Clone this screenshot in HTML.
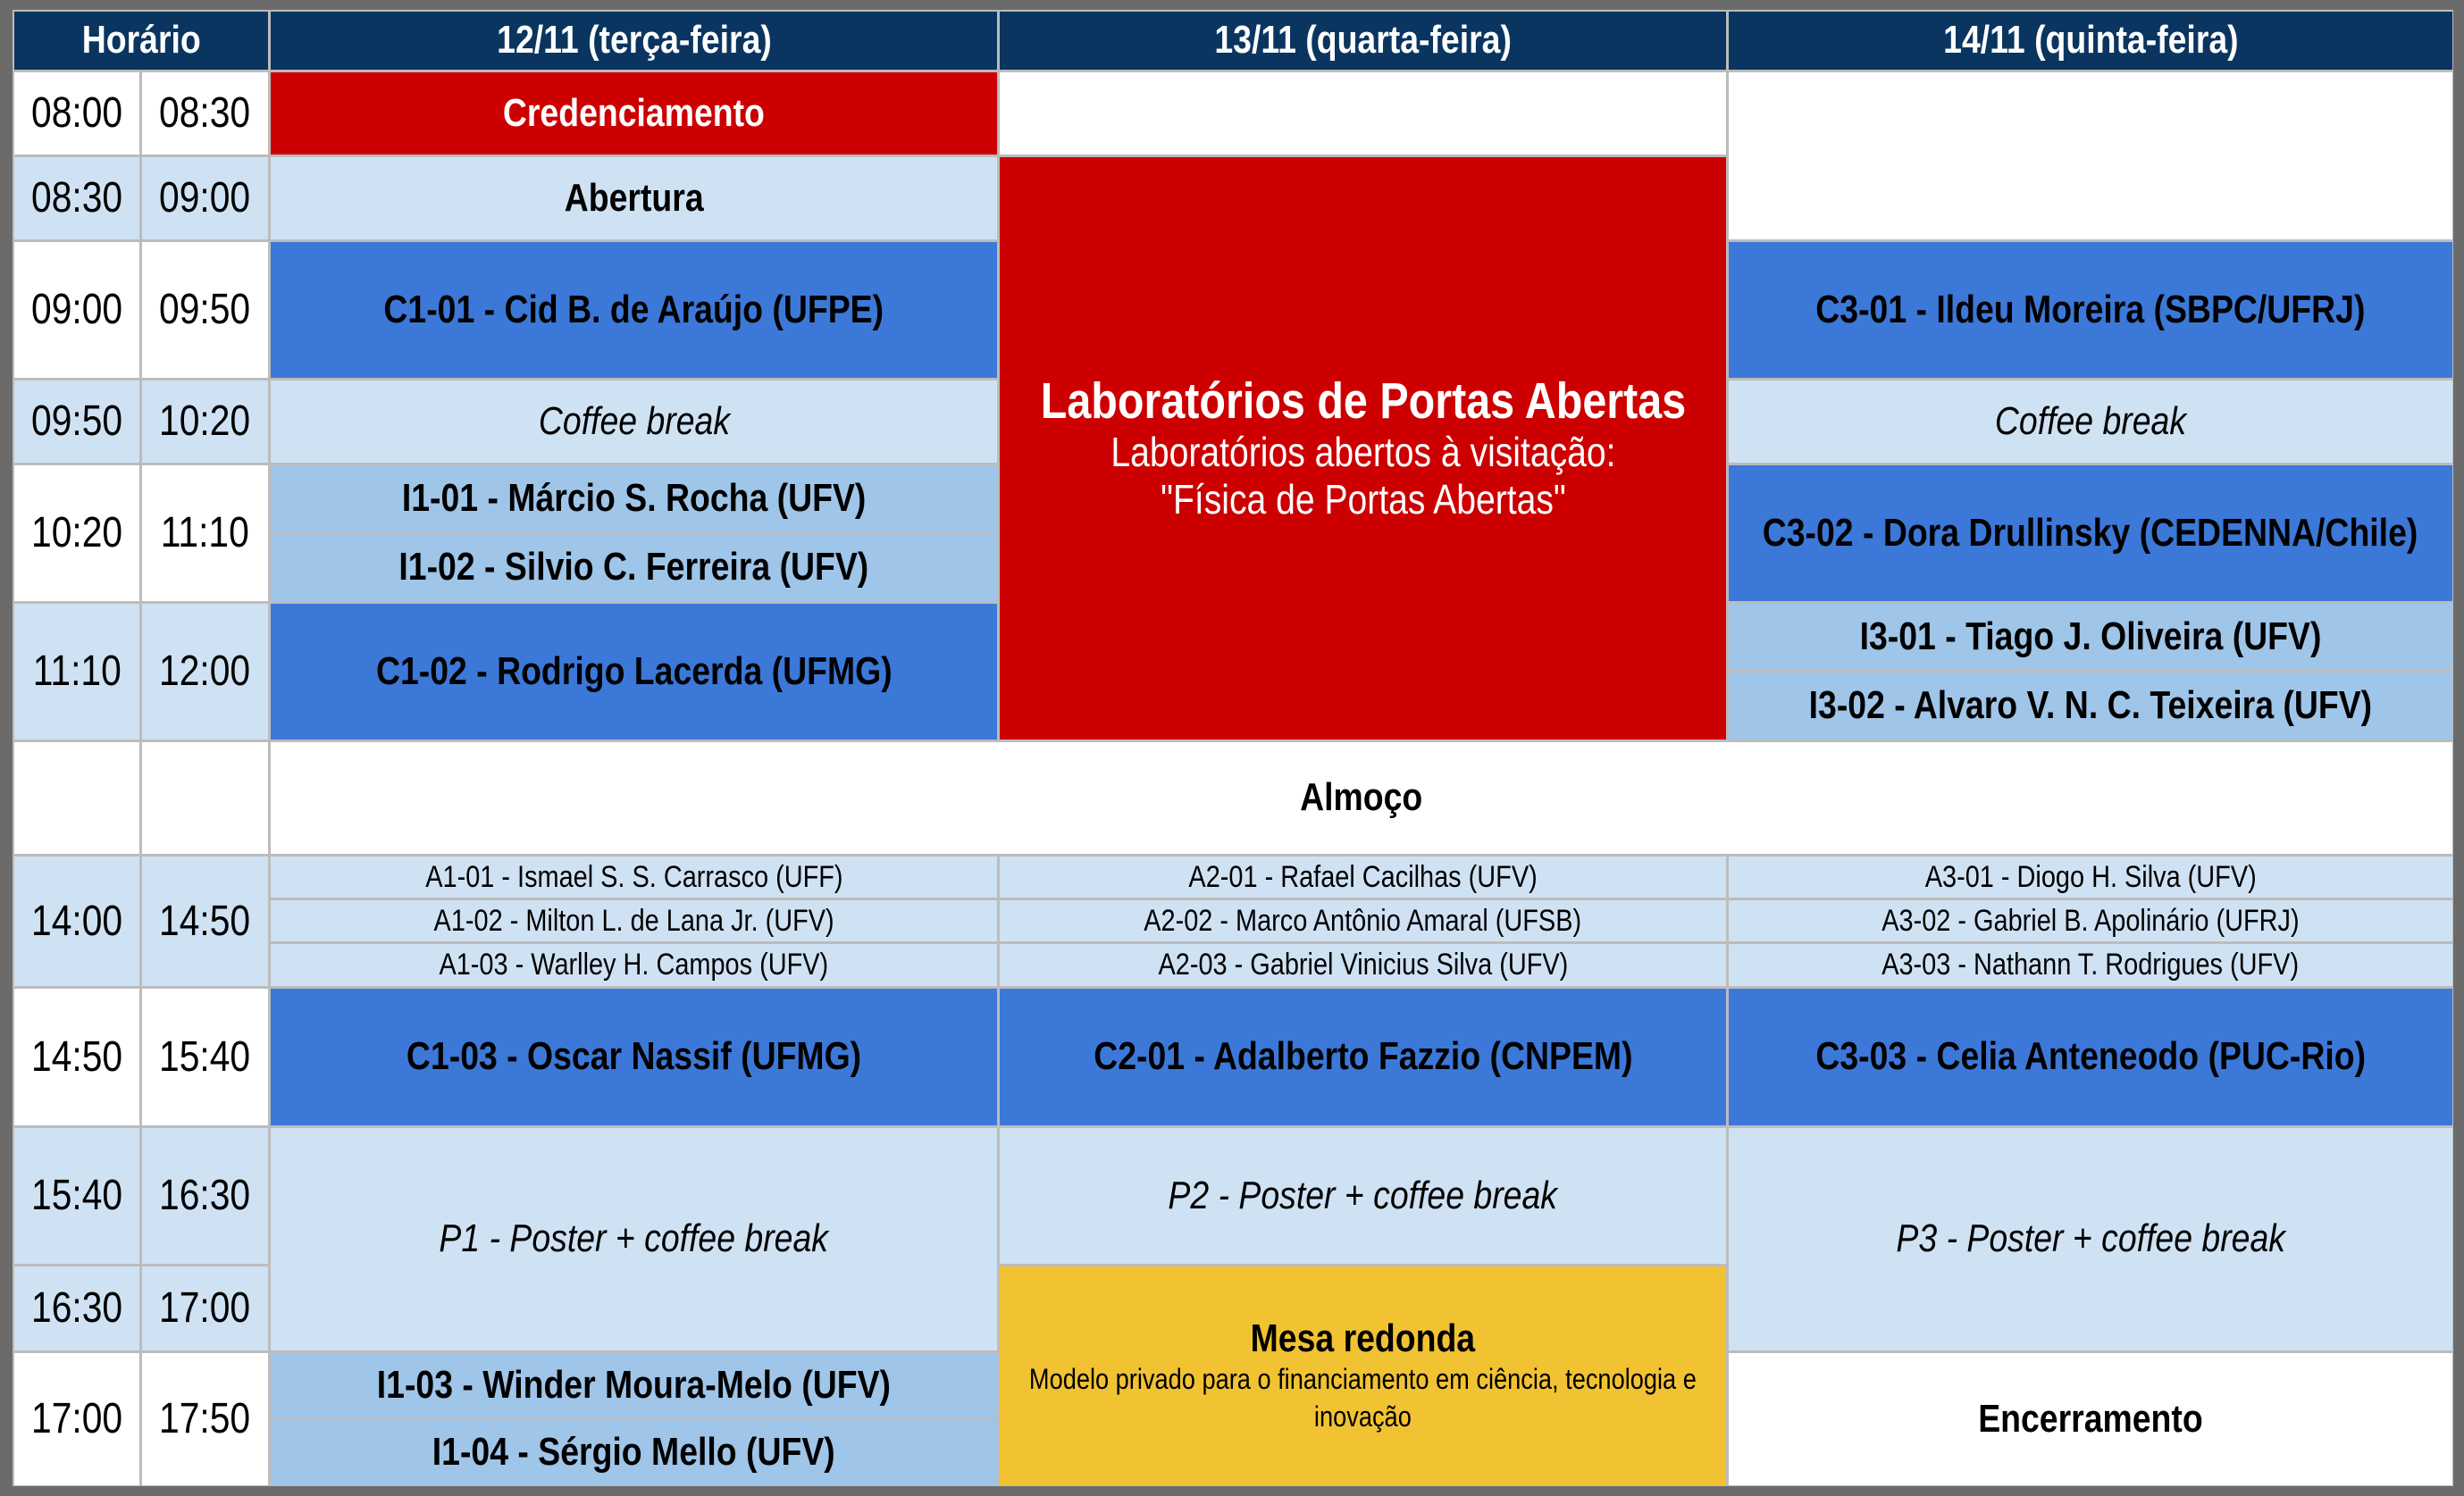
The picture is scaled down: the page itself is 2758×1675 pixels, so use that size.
<!DOCTYPE html>
<html><head><meta charset="utf-8"><style>
*{margin:0;padding:0;box-sizing:border-box}
body{width:2758px;height:1675px;background:#6b6b6b;position:relative;overflow:hidden;font-family:"Liberation Sans",sans-serif;color:#000}
#in{position:absolute;left:14px;top:11px;width:2732px;height:1653px;background:#bcbcbc}
.c{position:absolute;display:flex;flex-direction:column;align-items:center;justify-content:center;text-align:center;line-height:1.2;white-space:nowrap}
.k{display:inline-block;transform:scaleX(.85);transform-origin:center}
.h{background:#0a3560;color:#fff;font-weight:bold;font-size:44px}
.w{background:#fff}.lb{background:#cfe2f3}.bl{background:#3c78d8}.mb{background:#9fc5e8}.rd{background:#cc0000;color:#fff}.yl{background:#f1c232}
.t{font-size:48px}.b{font-weight:bold;font-size:44px}.i{font-style:italic;font-size:44px}.s{font-size:34px}
</style></head><body>
<div id="in"></div>
<div id="g"></div>
<script>
var X={a:14,b:157,c:301,d:1117,e:1933,f:2746};
var H='';
function C(x1,x2,y1,y2,cls,html){var l=X[x1]+2,r=X[x2]-1;H+='<div class="c '+cls+'" style="left:'+l+'px;top:'+(y1+2)+'px;width:'+(r-l)+'px;height:'+(y2-y1-3)+'px">'+(html?'<span class="k">'+html+'</span>':'')+'</div>';}
C('a','c',11,79,'h','Horário');
C('c','d',11,79,'h','12/11 (terça-feira)');
C('d','e',11,79,'h','13/11 (quarta-feira)');
C('e','f',11,79,'h','14/11 (quinta-feira)');
var T=[[79,174,'w','08:00','08:30'],[174,269,'lb','08:30','09:00'],[269,424,'w','09:00','09:50'],[424,519,'lb','09:50','10:20'],[519,674,'w','10:20','11:10'],[674,829,'lb','11:10','12:00'],[829,957,'w','',''],[957,1105,'lb','14:00','14:50'],[1105,1261,'w','14:50','15:40'],[1261,1416,'lb','15:40','16:30'],[1416,1513,'lb','16:30','17:00'],[1513,1664,'w','17:00','17:50']];
T.forEach(function(r){C('a','b',r[0],r[1],r[2]+' t',r[3]);C('b','c',r[0],r[1],r[2]+' t',r[4]);});
C('c','d',79,174,'rd b','Credenciamento');
C('c','d',174,269,'lb b','Abertura');
C('c','d',269,424,'bl b','C1-01 - Cid B. de Araújo (UFPE)');
C('c','d',424,519,'lb i','Coffee break');
C('c','d',519,596,'mb b','I1-01 - Márcio S. Rocha (UFV)');
C('c','d',596,674,'mb b','I1-02 - Silvio C. Ferreira (UFV)');
C('c','d',674,829,'bl b','C1-02 - Rodrigo Lacerda (UFMG)');
C('c','f',829,957,'w b','Almoço');
C('c','d',957,1006,'lb s','A1-01 - Ismael S. S. Carrasco (UFF)');
C('c','d',1006,1055,'lb s','A1-02 - Milton L. de Lana Jr. (UFV)');
C('c','d',1055,1105,'lb s','A1-03 - Warlley H. Campos (UFV)');
C('c','d',1105,1261,'bl b','C1-03 - Oscar Nassif (UFMG)');
C('c','d',1261,1513,'lb i','P1 - Poster + coffee break');
C('c','d',1513,1588,'mb b','I1-03 - Winder Moura-Melo (UFV)');
C('c','d',1588,1664,'mb b','I1-04 - Sérgio Mello (UFV)');
C('d','e',79,174,'w','');
C('d','e',174,829,'rd','<div style="font-weight:bold;font-size:57px;line-height:1.1">Laboratórios de Portas Abertas</div><div style="font-size:46px;line-height:1.15">Laboratórios abertos à visitação:<br>"Física de Portas Abertas"</div>');
C('d','e',957,1006,'lb s','A2-01 - Rafael Cacilhas (UFV)');
C('d','e',1006,1055,'lb s','A2-02 - Marco Antônio Amaral (UFSB)');
C('d','e',1055,1105,'lb s','A2-03 - Gabriel Vinicius Silva (UFV)');
C('d','e',1105,1261,'bl b','C2-01 - Adalberto Fazzio (CNPEM)');
C('d','e',1261,1416,'lb i','P2 - Poster + coffee break');
C('d','e',1416,1664,'yl','<div style="font-weight:bold;font-size:44px;line-height:1.15">Mesa redonda</div><div style="font-size:32px;line-height:1.3">Modelo privado para o financiamento em ciência, tecnologia e<br>inovação</div>');
C('e','f',79,269,'w','');
C('e','f',269,424,'bl b','C3-01 - Ildeu Moreira (SBPC/UFRJ)');
C('e','f',424,519,'lb i','Coffee break');
C('e','f',519,674,'bl b','C3-02 - Dora Drullinsky (CEDENNA/Chile)');
C('e','f',674,751,'mb b','I3-01 - Tiago J. Oliveira (UFV)');
C('e','f',751,829,'mb b','I3-02 - Alvaro V. N. C. Teixeira (UFV)');
C('e','f',957,1006,'lb s','A3-01 - Diogo H. Silva (UFV)');
C('e','f',1006,1055,'lb s','A3-02 - Gabriel B. Apolinário (UFRJ)');
C('e','f',1055,1105,'lb s','A3-03 - Nathann T. Rodrigues (UFV)');
C('e','f',1105,1261,'bl b','C3-03 - Celia Anteneodo (PUC-Rio)');
C('e','f',1261,1513,'lb i','P3 - Poster + coffee break');
C('e','f',1513,1664,'w b','Encerramento');
document.getElementById('g').innerHTML=H;
</script>
</body></html>
